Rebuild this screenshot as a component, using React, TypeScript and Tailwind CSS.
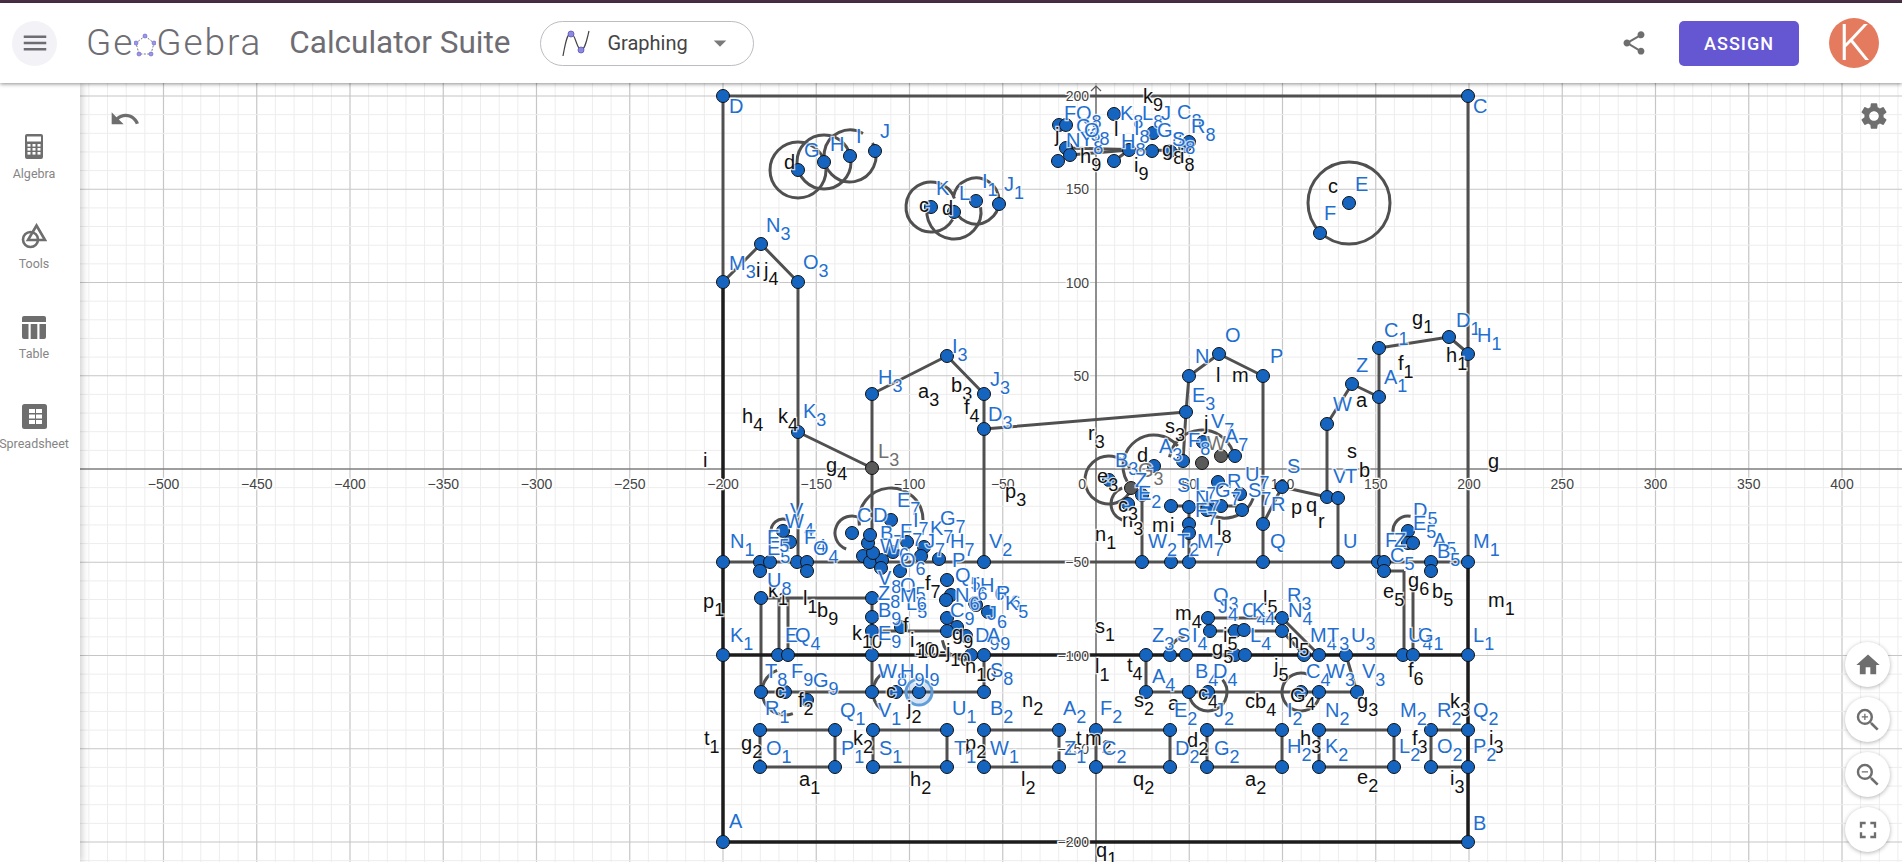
import React from "react";
import { MdMenu, MdUndo, MdSettings, MdHome, MdZoomIn, MdZoomOut, MdFullscreen, MdShare, MdArrowDropDown } from "react-icons/md";

const X0 = 1096;
const Y0 = 469;
const U = 1.865;

const thick: string[] = [
  "723,282 723,842 1468,842",
  "723,655 1468,655",
  "1468,562 1468,842",
];
const lines: string[] = [
  "723,96 1468,96 1468,562",
  "723,96 723,282",
  "723,562 1468,562",
  "723,282 761,244 798,282 798,562",
  "872,394 947,356 984,394 984,562",
  "872,394 872,562",
  "798,432 872,468",
  "984,429 1186,412 1189,376 1219,354 1263,376 1263,562",
  "1186,412 1183,461",
  "1263,524 1282,487 1327,497 1327,424 1352,384 1379,397",
  "1338,498 1338,562",
  "1379,348 1379,562",
  "1379,348 1449,337 1469,354",
  "1142,495 1142,562",
  "1189,507 1189,562",
  "1171,506 1242,506",
  "761,598 872,598",
  "761,598 761,692 984,692",
  "779,598 779,655",
  "788,598 788,655",
  "872,598 872,692",
  "872,631 947,631",
  "984,655 984,692",
  "1146,655 1146,692 1357,692",
  "1346,655 1357,692",
  "1282,618 1319,655",
  "1282,631 1304,655",
  "1210,631 1282,631",
  "1208,618 1282,618",
  "1384,571 1404,571",
  "1404,571 1404,655",
  "1413,590 1413,655",
  "1070,155 1129,150",
  "1114,161 1129,150",
  "1066,148 1189,151",
  "760,730 835,730 835,767 760,767 760,730",
  "873,730 947,730 947,767 873,767 873,730",
  "984,730 1059,730 1059,767 984,767 984,730",
  "1096,730 1170,730 1170,767 1096,767 1096,730",
  "1207,730 1282,730 1282,767 1207,767 1207,730",
  "1319,730 1394,730 1394,767 1319,767 1319,730",
  "1431,730 1468,730 1468,767 1431,767 1431,730",
];

// cx, cy, r, start angle, end angle (degrees, clockwise from east)
const arcs: number[][] = [
  [798, 170, 28, 0, 360],
  [824, 162, 27, 0, 360],
  [850, 156, 26, -30, 300],
  [931, 207, 25, 30, 340],
  [954, 212, 27, -10, 200],
  [976, 201, 23, -170, 170],
  [1349, 203, 41, 0, 360],
  [1154, 466, 31, 150, 320],
  [1109, 480, 24, 20, 330],
  [1128, 504, 17, 110, 250],
  [1202, 463, 33, 190, 340],
  [1225, 488, 30, 20, 130],
  [852, 533, 17, 110, 300],
  [891, 520, 32, 170, 360],
  [783, 531, 12, 170, 290],
  [785, 692, 23, 120, 250],
  [896, 692, 23, 130, 240],
  [785, 692, 23, 70, 120],
  [1208, 692, 19, -40, 170],
  [1301, 692, 19, 20, 290],
  [1188, 655, 19, 190, 260],
  [1408, 531, 15, 170, 280],
  [966, 636, 24, 60, 170],
];

const points: number[][] = [
  [723, 96], [1468, 96], [723, 842], [1468, 842],
  [798, 170], [824, 162], [850, 156], [875, 151],
  [931, 207], [954, 212], [976, 201], [999, 204],
  [1349, 203], [1320, 233],
  [1059, 125], [1066, 125], [1114, 114], [1066, 148], [1070, 155], [1058, 161], [1114, 161], [1129, 150], [1152, 151], [1153, 133], [1170, 151], [1185, 146], [1189, 142],
  [723, 282], [761, 244], [798, 282],
  [872, 394], [947, 356], [984, 394], [984, 429], [798, 432],
  [1189, 376], [1219, 354], [1263, 376], [1186, 412], [1183, 461], [1235, 456], [1203, 442], [1154, 466], [1109, 480], [1128, 504], [1142, 495], [1218, 482], [1240, 494], [1282, 487], [1327, 497], [1338, 498], [1327, 424], [1352, 384], [1379, 397], [1379, 348], [1449, 337], [1468, 354],
  [1171, 506], [1189, 507], [1208, 506], [1207, 510], [1221, 506], [1242, 510], [1189, 524], [1189, 533], [1263, 524],
  [723, 562], [760, 562], [770, 562], [797, 562], [807, 562], [984, 562], [1142, 562], [1171, 562], [1189, 562], [1263, 562], [1338, 562], [1378, 562], [1384, 562], [1384, 571], [1431, 562], [1431, 571], [1468, 562],
  [1408, 531], [1408, 543], [1413, 543],
  [863, 556], [870, 562], [882, 560], [873, 553], [868, 543], [870, 535], [852, 533], [891, 520], [893, 552], [907, 542], [924, 547], [921, 556], [939, 559], [900, 571], [881, 568], [760, 571], [807, 571], [783, 531], [790, 542],
  [947, 580], [951, 595], [946, 600], [975, 603], [976, 605], [988, 612], [947, 618], [957, 627], [947, 631], [966, 636], [901, 627],
  [761, 598], [872, 598], [872, 617], [872, 631],
  [723, 655], [778, 655], [788, 655], [872, 655], [971, 655], [984, 655], [1146, 655], [1170, 655], [1186, 655], [1235, 655], [1245, 655], [1304, 655], [1319, 655], [1346, 655], [1403, 655], [1413, 655], [1468, 655],
  [1208, 618], [1210, 631], [1235, 631], [1244, 630], [1282, 618], [1282, 631],
  [761, 692], [785, 692], [807, 700], [872, 692], [896, 692], [919, 692], [984, 692],
  [1146, 692], [1189, 692], [1208, 692], [1301, 692], [1319, 692], [1357, 692],
  [760, 730], [835, 730], [760, 767], [835, 767], [873, 730], [947, 730], [873, 767], [947, 767], [984, 730], [1059, 730], [984, 767], [1059, 767], [1096, 730], [1170, 730], [1096, 767], [1170, 767], [1207, 730], [1282, 730], [1207, 767], [1282, 767], [1319, 730], [1394, 730], [1319, 767], [1394, 767], [1431, 730], [1468, 730], [1431, 767], [1468, 767],
];
const grayPoints: number[][] = [[872, 468], [1202, 463], [1221, 456], [1131, 488]];

type L = [string, number, number];
const blue: L[] = [
  ["D", 729, 113], ["C", 1473, 113], ["A", 729, 828], ["B", 1473, 830],
  ["G", 804, 157], ["H", 830, 151], ["I", 856, 143], ["J", 880, 138],
  ["K", 936, 195], ["L", 959, 200], ["I_1", 982, 188], ["J_1", 1004, 191],
  ["E", 1355, 191], ["F", 1324, 220],
  ["F", 1064, 120], ["Q_8", 1076, 120], ["C_8", 1076, 133], ["N", 1066, 147], ["Y_8", 1080, 146], ["O_8", 1084, 137],
  ["K_8", 1120, 120], ["L_8", 1142, 120], ["J", 1161, 120], ["C_8", 1177, 119], ["I_8", 1134, 135], ["G_8", 1157, 137], ["R_8", 1191, 133], ["H_8", 1121, 148], ["S_8", 1172, 146],
  ["N_3", 766, 232], ["M_3", 729, 270], ["O_3", 803, 269],
  ["I_3", 952, 353], ["H_3", 878, 384], ["J_3", 990, 386], ["D_3", 988, 421], ["K_3", 803, 418],
  ["O", 1225, 342], ["N", 1195, 363], ["P", 1270, 363], ["E_3", 1192, 402], ["V_7", 1211, 428], ["A_7", 1225, 443], ["F_8", 1188, 447], ["A_3", 1159, 453], ["B_3", 1115, 467], ["Z", 1135, 487], ["E_2", 1138, 500], ["S", 1177, 492], ["L_7", 1195, 492], ["R", 1227, 488], ["U_7", 1245, 481], ["S_7", 1248, 497], ["R", 1271, 511], ["G_7", 1215, 497], ["N_7", 1195, 505], ["F_7", 1195, 517], ["W_2", 1148, 548], ["T_2", 1177, 548], ["M_7", 1197, 548],
  ["Q", 1270, 548], ["U", 1343, 548], ["V", 1333, 483], ["T", 1345, 483], ["S", 1287, 473], ["W", 1333, 411], ["Z", 1356, 372], ["A_1", 1384, 384], ["C_1", 1384, 337], ["D_1", 1456, 327], ["H_1", 1477, 342],
  ["D_5", 1413, 517], ["E_5", 1413, 530], ["F", 1385, 547], ["Z", 1394, 547], ["C_5", 1390, 562], ["A_5", 1433, 547], ["B_5", 1437, 558], ["M_1", 1473, 548],
  ["N_1", 730, 548], ["K_1", 730, 642], ["U_8", 767, 587], ["V", 790, 517], ["W_4", 785, 528], ["E_5", 767, 555], ["F_5", 767, 544], ["F_4", 804, 544], ["O_4", 813, 555], ["E", 785, 642], ["Q_4", 795, 642],
  ["C", 857, 522], ["D", 873, 522], ["E_7", 897, 507], ["I_7", 913, 527], ["B_7", 880, 540], ["F_7", 900, 538], ["K_7", 930, 535], ["G_7", 940, 525], ["H_7", 950, 548], ["J_7", 925, 548], ["W_6", 880, 553], ["O_6", 900, 567], ["P", 952, 567], ["V_2", 989, 548],
  ["V_8", 878, 585], ["Z_8", 878, 600], ["B_9", 878, 617], ["E_9", 878, 640], ["O_5", 900, 592], ["Q_5", 955, 582], ["N_6", 955, 602], ["C_9", 950, 617], ["H_6", 980, 592], ["I_6", 972, 592], ["J_6", 987, 620], ["D_9", 975, 642], ["A_9", 987, 642], ["S_8", 990, 677], ["L_5", 906, 610], ["M_6", 900, 602], ["R_6", 996, 600], ["K_5", 1005, 610],
  ["T_8", 765, 678], ["F_9", 791, 678], ["G_9", 813, 687], ["R_1", 765, 715], ["W_8", 878, 678], ["H_9", 900, 678], ["I_9", 924, 678], ["Q_1", 840, 717], ["V_1", 878, 717], ["U_1", 952, 715], ["B_2", 990, 715], ["A_2", 1063, 715], ["F_2", 1100, 715],
  ["O_1", 766, 755], ["P_1", 841, 755], ["S_1", 879, 755], ["T_1", 954, 755], ["W_1", 990, 755], ["Z_1", 1064, 755], ["C_2", 1102, 755], ["D_2", 1175, 755], ["G_2", 1214, 755], ["H_2", 1287, 753], ["K_2", 1325, 753], ["L_2", 1399, 753], ["O_2", 1437, 753], ["P_2", 1473, 753],
  ["A_4", 1152, 683], ["E_2", 1174, 717], ["J_2", 1214, 717], ["B_4", 1195, 678], ["D_4", 1213, 678],
  ["Q_3", 1213, 602], ["J_4", 1218, 613], ["C_4", 1242, 617], ["K_4", 1252, 617], ["R_3", 1287, 602], ["N_4", 1288, 617], ["Z_3", 1152, 642], ["S", 1177, 642], ["I_4", 1192, 642], ["L_4", 1250, 642], ["M_4", 1310, 642], ["T_3", 1327, 642], ["U_3", 1351, 642], ["U_4", 1408, 642], ["G_1", 1418, 642], ["L_1", 1473, 642],
  ["C_4", 1306, 678], ["W_3", 1326, 678], ["V_3", 1362, 678], ["I_2", 1287, 717], ["N_2", 1325, 717], ["M_2", 1400, 717], ["R_2", 1437, 717], ["Q_2", 1473, 717],
];
const gray: L[] = [["L_3", 878, 458], ["G_3", 1138, 477], ["W", 1207, 450]];
const black: L[] = [
  ["k_9", 1143, 103], ["j", 1055, 142], ["h_9", 1080, 163], ["i_9", 1134, 172], ["l", 1114, 136], ["g_8", 1162, 156], ["i_8", 1180, 163],
  ["d", 784, 169], ["c", 919, 212], ["d", 942, 215], ["c", 1328, 193],
  ["i", 756, 277], ["j_4", 764, 277],
  ["a_3", 918, 398], ["b_3", 951, 392], ["f_4", 964, 414], ["k_4", 778, 423], ["h_4", 742, 423], ["g_4", 826, 472],
  ["i", 703, 467], ["g", 1488, 468], ["p_3", 1005, 498], ["l", 1216, 382], ["m", 1232, 382], ["s_3", 1165, 433], ["r_3", 1088, 440], ["j", 1204, 430], ["d", 1137, 462], ["e_3", 1097, 483], ["n_3", 1122, 527], ["c_3", 1118, 512], ["m", 1152, 532], ["i", 1170, 532], ["n_1", 1095, 541], ["l_8", 1217, 535],
  ["p", 1291, 514], ["q", 1306, 512], ["r", 1318, 528], ["s", 1347, 458], ["b", 1359, 477], ["a", 1356, 407], ["f_1", 1398, 370], ["g_1", 1412, 325], ["h_1", 1446, 362],
  ["e_5", 1383, 598], ["g_6", 1408, 587], ["b_5", 1432, 598], ["f_6", 1408, 677], ["m_1", 1488, 607],
  ["p_1", 703, 608], ["k_1", 768, 597], ["l_1", 803, 605], ["b_9", 817, 617], ["k_10", 852, 640], ["s_1", 1095, 633], ["l_1", 1095, 673], ["i_10", 910, 647], ["10-j_10", 917, 658], ["n_10", 965, 673], ["f_7", 925, 590], ["f", 903, 632],
  ["g_9", 952, 640], ["n_2", 1022, 707], ["f_2", 798, 707], ["j_2", 907, 715], ["c", 775, 698], ["c", 886, 698],
  ["t_1", 704, 745], ["g_2", 741, 750], ["k_2", 853, 745], ["p_2", 965, 750], ["t", 1076, 745], ["m_2", 1085, 745],
  ["a_1", 799, 786], ["h_2", 910, 786], ["l_2", 1021, 786], ["q_2", 1133, 786], ["a_2", 1245, 786], ["e_2", 1357, 784], ["i_3", 1450, 785], ["q_1", 1096, 857],
  ["t_4", 1127, 672], ["s_2", 1134, 707], ["a", 1168, 710], ["c_4", 1198, 700],
  ["m_4", 1175, 620], ["l_5", 1263, 605], ["g_5", 1212, 655], ["i_5", 1223, 642], ["h_5", 1288, 648], ["j_5", 1274, 673], ["g_3", 1357, 708], ["k_3", 1450, 708], ["c", 1245, 708], ["b_4", 1255, 708], ["G_4", 1290, 702],
  ["h_3", 1300, 745], ["f_3", 1412, 745], ["d_2", 1187, 747], ["i_3", 1489, 745],
];

function arcPath(cx: number, cy: number, r: number, a0: number, a1: number) {
  if (a1 - a0 >= 360) return `M ${cx - r} ${cy} a ${r} ${r} 0 1 0 ${2 * r} 0 a ${r} ${r} 0 1 0 ${-2 * r} 0`;
  const p = (a: number) => [cx + r * Math.cos((a * Math.PI) / 180), cy + r * Math.sin((a * Math.PI) / 180)];
  const [x0, y0] = p(a0);
  const [x1, y1] = p(a1);
  return `M ${x0} ${y0} A ${r} ${r} 0 ${a1 - a0 > 180 ? 1 : 0} 1 ${x1} ${y1}`;
}

function Lbl({ l, fill }: { l: L; fill: string }) {
  const [t, x, y] = l;
  const i = t.lastIndexOf("_");
  return (
    <text x={x} y={y} fill={fill} fontSize={20} stroke="#fff" strokeOpacity={0.75} strokeWidth={2.5} paintOrder="stroke" fontFamily="'Liberation Sans',sans-serif">
      {i < 0 ? t : t.slice(0, i)}
      {i >= 0 && (
        <tspan dy={8} fontSize={18}>
          {t.slice(i + 1)}
        </tspan>
      )}
    </text>
  );
}

function Graph() {
  const vx: number[] = [];
  for (let k = -60; k <= 50; k++) vx.push(k);
  const hy: number[] = [];
  for (let k = -25; k <= 25; k++) hy.push(k);
  const xTicks = [-500, -450, -400, -350, -300, -250, -200, -150, -100, -50, 50, 100, 150, 200, 250, 300, 350, 400];
  const yTicks = [200, 150, 100, 50, -50, -100, -150, -200];
  const tick = (v: number) => (v < 0 ? "\u2212" + Math.abs(v) : String(v));
  return (
    <svg className="block w-full h-full" viewBox="80 83 1822 779" preserveAspectRatio="none">
      <rect x="80" y="83" width="1822" height="779" fill="#fff" />
      {vx.map((k) => (
        <line key={"v" + k} x1={X0 + k * 10 * U} x2={X0 + k * 10 * U} y1={83} y2={862} stroke={k % 5 === 0 ? "#c6c6c6" : "#ededed"} strokeWidth={k % 5 === 0 ? 1.2 : 1} />
      ))}
      {hy.map((k) => (
        <line key={"h" + k} y1={Y0 + k * 10 * U} y2={Y0 + k * 10 * U} x1={80} x2={1902} stroke={k % 5 === 0 ? "#c6c6c6" : "#ededed"} strokeWidth={k % 5 === 0 ? 1.2 : 1} />
      ))}
      <line x1={80} x2={1902} y1={Y0} y2={Y0} stroke="#5a5a5a" strokeWidth={1.2} />
      <line x1={X0} x2={X0} y1={86} y2={862} stroke="#5a5a5a" strokeWidth={1.2} />
      <path d="M1091 91 L1096 86 L1101 91" fill="none" stroke="#5a5a5a" strokeWidth={1.2} />
      <g fill="none" strokeWidth={3} strokeLinejoin="round">
        {lines.map((p, i) => (
          <polyline key={i} points={p} stroke="#505050" />
        ))}
        {arcs.map((a, i) => (
          <path key={i} d={arcPath(a[0], a[1], a[2], a[3], a[4])} stroke="#505050" />
        ))}
        {thick.map((p, i) => (
          <polyline key={i} points={p} stroke="#1c1c1c" strokeWidth={3.5} />
        ))}
      </g>
      <g fontFamily="'Liberation Sans',sans-serif" fontSize={14} fill="#444" stroke="#fff" strokeWidth={2.5} paintOrder="stroke">
        {xTicks.map((v) => (
          <text key={v} x={X0 + v * U} y={489} textAnchor="middle">
            {tick(v)}
          </text>
        ))}
        {yTicks.map((v) => (
          <text key={v} x={1089} y={Y0 - v * U + 5} textAnchor="end">
            {tick(v)}
          </text>
        ))}
        <text x={1086} y={489} textAnchor="end">
          0
        </text>
      </g>
      <circle cx={919} cy={692} r={13} fill="#1565c0" fillOpacity={0.18} stroke="#5f9ddb" strokeWidth={3} />
      {points.map((p, i) => (
        <circle key={i} cx={p[0]} cy={p[1]} r={6.5} fill="#1565c0" stroke="#111" strokeWidth={1} />
      ))}
      {grayPoints.map((p, i) => (
        <circle key={i} cx={p[0]} cy={p[1]} r={6.5} fill="#5a5a5a" stroke="#111" strokeWidth={1} />
      ))}
      {black.map((l, i) => (
        <Lbl key={"k" + i} l={l} fill="#111" />
      ))}
      {gray.map((l, i) => (
        <Lbl key={"g" + i} l={l} fill="#707070" />
      ))}
      {blue.map((l, i) => (
        <Lbl key={"b" + i} l={l} fill="#1f6fd0" />
      ))}
    </svg>
  );
}

function CalcIcon() {
  return (
    <svg width="18" height="25" viewBox="0 0 18 25">
      <rect x="0" y="0" width="18" height="25" rx="2" fill="#6e6e6e" />
      <rect x="2" y="2.5" width="14" height="5" fill="#fff" />
      {[10, 14, 18].map((y) => [2.5, 7.5, 12.5].map((x) => <rect key={x + "-" + y} x={x} y={y} width="3" height="2.6" fill="#fff" />))}
    </svg>
  );
}
function ToolsIcon() {
  return (
    <svg width="26" height="26" viewBox="0 0 26 26" fill="none" stroke="#6e6e6e" strokeWidth="2.6">
      <circle cx="9.5" cy="16.5" r="7.5" />
      <path d="M15.5 2.5 L24 17 H7 Z" strokeLinejoin="miter" />
    </svg>
  );
}
function TableIcon() {
  return (
    <svg width="24" height="23" viewBox="0 0 24 23" fill="#6e6e6e">
      <path d="M2 0H22A2 2 0 0 1 24 2V6H0V2A2 2 0 0 1 2 0Z" />
      <path d="M0 8H6.5V23H2A2 2 0 0 1 0 21Z" />
      <rect x="8.7" y="8" width="6.6" height="15" />
      <path d="M17.5 8H24V21A2 2 0 0 1 22 23H17.5Z" />
    </svg>
  );
}
function SheetIcon() {
  return (
    <svg width="25" height="25" viewBox="0 0 25 25">
      <rect width="25" height="25" rx="2.5" fill="#6e6e6e" />
      <rect x="7" y="5" width="6" height="4" fill="#fff" />
      <rect x="14" y="5" width="6" height="4" fill="#fff" />
      <rect x="7" y="10.5" width="6" height="4" fill="#fff" />
      <rect x="14" y="10.5" width="6" height="4" fill="#fff" />
      <rect x="7" y="16" width="6" height="4" fill="#fff" />
      <rect x="14" y="16" width="6" height="4" fill="#fff" />
    </svg>
  );
}
function GraphingIcon() {
  return (
    <svg width="28" height="28" viewBox="0 0 28 28" fill="none">
      <path d="M1 27 C3 16 5 4 9 4 C13 4 15 21 19 21 C23 21 25 10 27 2" stroke="#444" strokeWidth="1.2" />
      <circle cx="9" cy="5" r="3" fill="#8c89e0" stroke="#5a56b8" strokeWidth="0.8" />
      <circle cx="19" cy="21" r="3" fill="#8c89e0" stroke="#5a56b8" strokeWidth="0.8" />
    </svg>
  );
}
function Pentagon() {
  const pts = [[11, 2], [20, 9], [17, 20], [5, 20], [2, 9]];
  return (
    <svg width="22" height="24" viewBox="0 0 22 22" className="mt-[4px]">
      <polygon points={pts.map((p) => p.join(",")).join(" ")} fill="none" stroke="#7a7880" strokeWidth="1" strokeDasharray="2 1.5" />
      {pts.map((p, i) => (
        <circle key={i} cx={p[0]} cy={p[1]} r="2" fill="#9a97e6" stroke="#6557d2" strokeWidth="0.6" />
      ))}
    </svg>
  );
}

function SideItem({ icon, label }: { icon: React.ReactNode; label: string }) {
  return (
    <div className="h-[90px] flex flex-col items-center">
      <div className="h-[32px] flex items-end justify-center">{icon}</div>
      <div className="mt-[7px] text-[12.5px] leading-[16px] text-[#858585] whitespace-nowrap">{label}</div>
    </div>
  );
}

function Fab({ children }: { children: React.ReactNode }) {
  return <div className="w-[45px] h-[45px] rounded-full bg-white shadow-[0_1px_4px_rgba(0,0,0,0.3)] flex items-center justify-center text-[#6e6e6e]">{children}</div>;
}

export default function App() {
  return (
    <div className="w-[1902px] h-[862px] flex flex-col overflow-hidden bg-white [font-family:Roboto,sans-serif]">
      <div className="h-[3px] bg-[#4a3045] shrink-0" />
      <header className="relative z-20 h-[80px] shrink-0 bg-white flex items-center pl-[12px] pr-[23px] shadow-[0_1px_4px_rgba(0,0,0,0.45)]">
        <div className="w-[45px] h-[45px] rounded-full bg-[#f3f2f7] flex items-center justify-center text-[#6e6d73]">
          <MdMenu size={30} />
        </div>
        <div className="ml-[29px] flex items-center text-[37px] leading-[40px] font-light text-[#6e6d73] tracking-[1.9px]">
          <span>Ge</span>
          <Pentagon />
          <span>Gebra</span>
        </div>
        <div className="ml-[27px] text-[31.5px] leading-[36px] text-[#6e6d73]">Calculator Suite</div>
        <div className="ml-[30px] w-[214px] h-[45px] rounded-full border border-[#bdbcc2] flex items-center pl-[21px]">
          <GraphingIcon />
          <span className="ml-[17px] text-[20px] text-[#444]">Graphing</span>
          <span className="ml-[17px] text-[#7a7a7a]">
            <MdArrowDropDown size={30} />
          </span>
        </div>
        <div className="flex-1" />
        <div className="text-[#6e6e6e] mr-[31px]">
          <MdShare size={28} />
        </div>
        <div className="w-[120px] h-[45px] rounded-[5px] bg-[#6557d2] flex items-center justify-center text-white text-[18px] font-medium tracking-[1px]">ASSIGN</div>
        <div className="ml-[30px] w-[50px] h-[50px] rounded-full bg-[#e57b5e] flex items-center justify-center text-white text-[50px] font-light leading-none">K</div>
      </header>
      <div className="flex-1 flex min-h-0">
        <aside className="relative z-10 w-[80px] shrink-0 bg-white pt-[44px] pr-[12px] shadow-[2px_0_7px_rgba(0,0,0,0.2)]">
          <SideItem icon={<CalcIcon />} label="Algebra" />
          <SideItem icon={<ToolsIcon />} label="Tools" />
          <SideItem icon={<TableIcon />} label="Table" />
          <SideItem icon={<SheetIcon />} label="Spreadsheet" />
        </aside>
        <main className="relative flex-1 min-w-0">
          <Graph />
          <div className="absolute left-[29px] top-[20px] text-[#6e6e6e]">
            <MdUndo size={32} />
          </div>
          <div className="absolute right-[12px] top-[17px] text-[#6e6e6e]">
            <MdSettings size={32} />
          </div>
          <div className="absolute right-[12px] bottom-[10px] flex flex-col gap-[10px]">
            <Fab>
              <MdHome size={28} />
            </Fab>
            <Fab>
              <MdZoomIn size={30} />
            </Fab>
            <Fab>
              <MdZoomOut size={30} />
            </Fab>
            <Fab>
              <MdFullscreen size={28} />
            </Fab>
          </div>
        </main>
      </div>
    </div>
  );
}
